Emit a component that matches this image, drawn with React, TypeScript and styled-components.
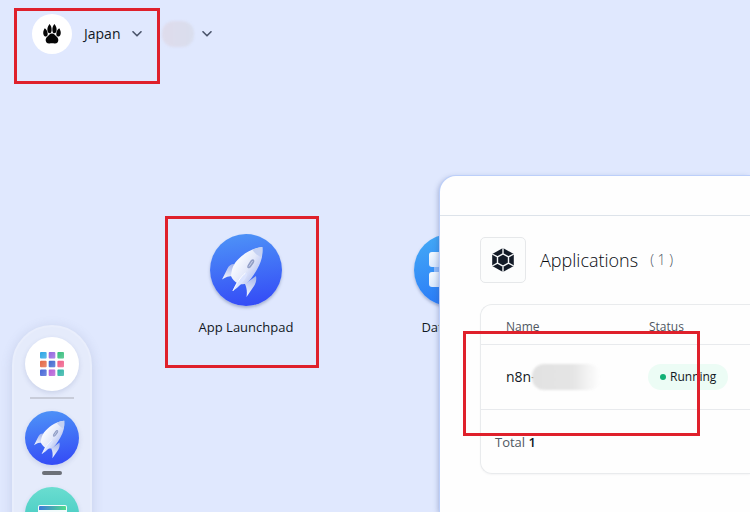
import React from "react";
import styled, { createGlobalStyle, css } from "styled-components";

const GlobalStyle = createGlobalStyle`
  *, *::before, *::after { box-sizing: border-box; }
  body {
    margin: 0;
    font-family: "Open Sans", "Noto Sans", sans-serif;
    color: #111824;
  }
  button { font: inherit; color: inherit; border: 0; padding: 0; background: none; cursor: pointer; }
  svg { display: block; }
`;

const Desktop = styled.div`
  position: relative;
  height: 100vh;
  overflow: hidden;
  background: #e0e8fe;
`;

const TopBar = styled.header`
  display: flex;
  align-items: center;
  height: 68px;
  padding-left: 32px;
`;

const RegionButton = styled.button`
  display: flex;
  align-items: center;
  gap: 12px;
  font-size: 14px;
  line-height: 20px;
`;

const Avatar = styled.span`
  display: grid;
  place-items: center;
  width: 40px;
  height: 40px;
  border-radius: 50%;
  background: #fff;
`;

const WorkspaceButton = styled.button`
  display: flex;
  align-items: center;
  gap: 8px;
  margin-left: 20px;
  font-size: 14px;
`;

const HiddenName = styled.span<{ $tone: "tinted" | "grey" }>`
  display: block;
  filter: blur(1px);
  ${(p) =>
    p.$tone === "tinted"
      ? css`
          width: 32px;
          height: 26px;
          border-radius: 12px;
          background: linear-gradient(90deg, #dfdcec, #d9deee);
        `
      : css`
          width: 68px;
          height: 26px;
          margin-left: -4px;
          border-radius: 12px;
          background: linear-gradient(90deg, #e2e2e2 0%, #e5e5e5 60%, #f5f5f5 85%, #fefefe 100%);
        `}
`;

const Workspace = styled.div`
  display: flex;
  align-items: flex-start;
`;

const Dock = styled.nav`
  display: flex;
  flex-direction: column;
  align-items: center;
  flex: none;
  width: 80px;
  margin: 257px 0 0 12px;
  padding: 10px 0 40px;
  border: 2px solid #e9eefc;
  border-radius: 40px;
  background: #e5ebfb;
  box-shadow: 0 2px 12px rgba(90, 105, 150, 0.2);
`;

const DockButton = styled.button<{ $plain?: boolean }>`
  display: grid;
  place-items: center;
  width: 54px;
  height: 54px;
  border-radius: 50%;
  background: ${(p) => (p.$plain ? "#fff" : "none")};
  box-shadow: 0 2px 5px rgba(60, 80, 140, 0.16);
`;

const DockDivider = styled.hr`
  width: 44px;
  height: 2px;
  margin: 6px 0 12px;
  border: 0;
  background: #c8ccd9;
`;

const ActiveMark = styled.span`
  width: 20px;
  height: 4px;
  margin: 6px 0 12px;
  border-radius: 2px;
  background: #6c7078;
`;

const AppGrid = styled.main`
  display: flex;
  margin: 166px 0 0 52px;
`;

const AppButton = styled.button`
  display: flex;
  flex-direction: column;
  align-items: center;
  gap: 11px;
  width: 204px;
  font-size: 13px;
  line-height: 20px;
`;

const AppIcon = styled.span`
  width: 72px;
  height: 72px;
  border-radius: 50%;
  box-shadow: 0 2px 3px rgba(60, 80, 130, 0.35);
`;

const AppWindow = styled.section`
  position: absolute;
  inset: 176px 0 0 440px;
  border-radius: 16px 0 0 0;
  background: #fefefe;
  box-shadow: 0 0 0 1px #bccffa, -2px 1px 5px rgba(70, 90, 150, 0.35);
`;

const TitleBar = styled.div`
  height: 40px;
  border-bottom: 1px solid #dde3ea;
`;

const WindowBody = styled.div`
  padding: 21px 0 0 40px;
`;

const Heading = styled.div`
  display: flex;
  align-items: center;
`;

const LogoTile = styled.span`
  display: grid;
  place-items: center;
  width: 46px;
  height: 46px;
  margin-right: 14px;
  border: 1px solid #e6e8ea;
  border-radius: 5px;
  background: #fcfdfd;
`;

const Title = styled.h1`
  margin: 0 12px 0 0;
  font-size: 18px;
  line-height: 26px;
  font-weight: 300;
  color: #05080e;
`;

const Count = styled.span`
  font-size: 14px;
  line-height: 20px;
  font-weight: 300;
  color: #4a5361;
`;

const Card = styled.div`
  margin-top: 21px;
  border: 1px solid #e9ebed;
  border-right: 0;
  border-radius: 12px 0 0 12px;
  box-shadow: 0 1px 2px rgba(20, 30, 50, 0.04);
`;

const Table = styled.table`
  width: 100%;
  border-collapse: separate;
  border-spacing: 0;
  table-layout: fixed;
`;

const HeadCell = styled.th<{ $first?: boolean }>`
  width: ${(p) => (p.$first ? "167px" : "auto")};
  height: 40px;
  padding: 4px 0 0 ${(p) => (p.$first ? "25px" : "1px")};
  border-bottom: 1px solid #e8eaed;
  text-align: left;
  font-size: 12px;
  line-height: 16px;
  font-weight: 400;
  color: #505762;
`;

const Cell = styled.td<{ $first?: boolean }>`
  height: 65px;
  padding: 0 0 0 ${(p) => (p.$first ? "25px" : "0")};
  border-bottom: 1px solid #e8eaed;
  font-size: 14px;
  line-height: 20px;
`;

const AppName = styled.span`
  display: flex;
  align-items: center;
`;

const StatusPill = styled.span`
  display: flex;
  align-items: center;
  gap: 4px;
  width: fit-content;
  height: 26px;
  padding: 0 12px;
  border-radius: 13px;
  background: #ecfcf5;
  font-size: 12px;
  line-height: 16px;
`;

const StatusDot = styled.span`
  width: 6px;
  height: 6px;
  border-radius: 50%;
  background: #12b076;
`;

const Footer = styled.div`
  height: 63px;
  padding: 22px 14px;
  font-size: 13px;
  line-height: 20px;
  color: #505762;
`;

const Total = styled.strong`
  font-weight: 600;
  color: #111824;
`;

const highlightPlaces = {
  region: "8px auto auto 14px",
  app: "216px auto auto 165px",
  row: "331px auto auto 463px",
};
const highlightSizes = {
  region: "width: 146px; height: 76px;",
  app: "width: 154px; height: 152px;",
  row: "width: 237px; height: 105px;",
};

const Highlight = styled.div<{ $target: keyof typeof highlightPlaces }>`
  position: absolute;
  inset: ${(p) => highlightPlaces[p.$target]};
  ${(p) => highlightSizes[p.$target]}
  border: 3px solid #df202b;
  pointer-events: none;
`;

function Chevron() {
  return (
    <svg width="10" height="6" viewBox="0 0 10 6" fill="none" stroke="#49536a" strokeWidth="1.6" strokeLinecap="round" strokeLinejoin="round" aria-hidden="true">
      <path d="M1 .8 5 4.8 9 .8" />
    </svg>
  );
}

function Paw() {
  return (
    <svg width="18" height="20" viewBox="0 0 18 20" fill="#050505" aria-hidden="true">
      <path d="M9 9.500c2.200 0 3 1.600 4.500 3 1.600 1.400 2.100 2.800 1.700 4.500-.4 1.800-1.900 2.700-3.600 2.500-1.800-.3-3.400-.3-5.200 0-1.700.2-3.200-.7-3.600-2.500-.4-1.700.1-3.100 1.700-4.500C6 11.100 6.800 9.500 9 9.500Z" />
      <path d="M6.600 0C8.200 2 8.900 4.100 8.600 6.500 8.400 8.400 7.800 9.300 6.700 9.300S4.500 8.200 4.400 6.300C4.200 3.900 5 1.900 6.600 0ZM11.400 0c1.600 1.900 2.400 3.900 2.200 6.300-.1 1.900-1.200 3-2.300 3S9.600 8.400 9.400 6.500C9.100 4.100 9.800 2 11.400 0Z" />
      <path d="M1.800 4.300c1.600 1.300 2.800 3.200 2.900 5.300.1 1.600-.5 2.700-1.700 2.900-1.200.1-2.200-.8-2.600-2.300C-.1 8.200.6 6 1.800 4.300ZM16.200 4.300c1.200 1.700 1.900 3.900 1.400 5.900-.4 1.500-1.400 2.400-2.600 2.300-1.200-.2-1.800-1.300-1.700-2.900.1-2.100 1.300-4 2.900-5.300Z" />
    </svg>
  );
}

function RocketIcon({ size, id }: { size: number; id: string }) {
  return (
    <svg width={size} height={size} viewBox="0 0 72 72" aria-hidden="true">
      <defs>
        <linearGradient id={`${id}-sky`} x1=".45" y1="0" x2=".6" y2="1">
          <stop offset="0" stopColor="#4d91f7" />
          <stop offset="1" stopColor="#344bf6" />
        </linearGradient>
        <linearGradient id={`${id}-hull`} x1=".2" y1=".3" x2=".8" y2=".75">
          <stop offset="0" stopColor="#fafcff" />
          <stop offset=".55" stopColor="#e4e9fa" />
          <stop offset="1" stopColor="#b9c6f3" />
        </linearGradient>
        <linearGradient id={`${id}-fin`} x1=".5" y1="0" x2=".3" y2="1">
          <stop offset="0" stopColor="#aab9ec" />
          <stop offset="1" stopColor="#f2f5ff" />
        </linearGradient>
      </defs>
      <circle cx="36" cy="36" r="36" fill={`url(#${id}-sky)`} />
      <path d="M24 30c-3 0-5 1.500-6.500 4.500L12 45.500c3.500-2.500 7-3.500 11.500-3.500Z" fill={`url(#${id}-fin)`} />
      <path d="M46 42c.8 4.500-.2 8-3 11.500L36.500 63c.8-5 .3-9-1.500-13Z" fill={`url(#${id}-fin)`} />
      <path d="M52.300 13c.8 8-.8 15-5.300 22.500-3.500 6-7 11-11 14.500-3.500-.5-5 1-8.500-.5-2.500-2-5.500-4.500-6.500-7.500.5-4.500 1-8.500 4-13C31 21.500 40 14.500 52.300 13Z" fill={`url(#${id}-hull)`} />
      <path d="M52.300 13c.3 4-.1 7.500-1 10.500-3.800-2-6.800-4.500-9-7.800 3-1.300 6.500-2.300 10-2.700Z" fill="#c5d1f2" />
      <path d="M43.600 25.600c1.200.9.800 2.400 0 3.700l-2.500 3.500c-1 1.300-2.300 2-3.300 1.200s-.5-2.300.3-3.600l2.200-3.300c1-1.400 2.200-2.300 3.300-1.500Z" fill="#909dc5" />
      <path d="m42.400 27.400-3.300 4.900" fill="none" stroke="#c9d1eb" strokeWidth="1" strokeLinecap="round" />
      <path d="M35.500 39c-5 3.500-9.500 9.500-12.700 18C29 53 34 47.500 37 41.500c.5-2-.1-3-1.500-2.500Z" fill="#dbe4ff" />
      <path d="M35.500 39C31 42.500 27 48.500 22.800 57" fill="none" stroke="#fff" strokeWidth=".9" />
    </svg>
  );
}

function DatabaseIcon() {
  return (
    <svg width="72" height="72" viewBox="0 0 72 72" aria-hidden="true">
      <defs>
        <linearGradient id="db-sky" x1=".3" y1="0" x2=".6" y2="1">
          <stop offset="0" stopColor="#43a8f6" />
          <stop offset="1" stopColor="#2877f7" />
        </linearGradient>
        <linearGradient id="db-block" x1="0" y1="0" x2="1" y2="1">
          <stop offset="0" stopColor="#f7fbff" />
          <stop offset="1" stopColor="#c7dcfb" />
        </linearGradient>
      </defs>
      <circle cx="36" cy="36" r="36" fill="url(#db-sky)" />
      <path d="M20 29h32v12H20z" fill="#8fbbf9" />
      <g fill="url(#db-block)">
        <rect x="15" y="18" width="18" height="15" rx="3" />
        <rect x="39" y="18" width="18" height="15" rx="3" />
        <rect x="15" y="38" width="18" height="15" rx="3" />
        <rect x="39" y="38" width="18" height="15" rx="3" />
      </g>
    </svg>
  );
}

const tiles = [
  ["#2ba5e5", "#9466df", "#35bd7c"],
  ["#e36643", "#3e67cf", "#ef5c86"],
  ["#4464d6", "#b45cd6", "#2db2a5"],
];

function TilesIcon() {
  return (
    <svg width="24" height="24" viewBox="0 0 24 24" aria-hidden="true">
      <defs>
        <linearGradient id="tile-light" x1="0" y1="0" x2="1" y2="1">
          <stop offset="0" stopColor="#fff" stopOpacity="0" />
          <stop offset="1" stopColor="#fff" stopOpacity=".25" />
        </linearGradient>
      </defs>
      {tiles.map((row, y) =>
        row.map((color, x) => (
          <g key={color}>
            <rect x={x * 8.700} y={y * 8.700} width="6.600" height="6.600" rx="1" fill={color} />
            <rect x={x * 8.700} y={y * 8.700} width="6.600" height="6.600" rx="1" fill="url(#tile-light)" />
          </g>
        ))
      )}
    </svg>
  );
}

function TerminalIcon() {
  return (
    <svg width="54" height="54" viewBox="0 0 54 54" aria-hidden="true">
      <defs>
        <linearGradient id="term-sea" x1="0" y1="0" x2="0" y2="1">
          <stop offset="0" stopColor="#6addd0" />
          <stop offset="1" stopColor="#35c3bd" />
        </linearGradient>
        <linearGradient id="term-bar" x1="0" y1="0" x2="1" y2="0">
          <stop offset="0" stopColor="#3c78d9" />
          <stop offset="1" stopColor="#51dc8c" />
        </linearGradient>
      </defs>
      <circle cx="27" cy="27" r="27" fill="url(#term-sea)" />
      <rect x="13" y="18" width="29" height="23" rx="2" fill="#f2fbfc" />
      <path d="M15 19h25a1 1 0 0 1 1 1v3H14v-3a1 1 0 0 1 1-1Z" fill="url(#term-bar)" />
    </svg>
  );
}

function HexLogo() {
  return (
    <svg width="24" height="24" viewBox="0 0 24 24" aria-hidden="true">
      <path d="m12 0 10.800 6v12L12 24 1.200 18V6Z" fill="#131b27" />
      <path d="m12 5.800 5.500 3.100v6.200L12 18.200l-5.500-3.100V8.900ZM12 0v5.800M22.800 6l-5.300 2.900M22.800 18l-5.300-2.900M12 24v-5.800M1.200 18l5.300-2.900M1.200 6l5.300 2.900" fill="none" stroke="#f4f6f7" strokeWidth="1.400" />
    </svg>
  );
}

export default function App() {
  return (
    <Desktop>
      <GlobalStyle />
      <TopBar>
        <RegionButton>
          <Avatar><Paw /></Avatar>
          Japan
          <Chevron />
        </RegionButton>
        <WorkspaceButton aria-label="Workspace">
          <HiddenName $tone="tinted" />
          <Chevron />
        </WorkspaceButton>
      </TopBar>

      <Workspace>
        <Dock aria-label="Dock">
          <DockButton $plain aria-label="All apps"><TilesIcon /></DockButton>
          <DockDivider />
          <DockButton aria-label="App Launchpad"><RocketIcon size={54} id="dock" /></DockButton>
          <ActiveMark />
          <DockButton aria-label="Terminal"><TerminalIcon /></DockButton>
        </Dock>
        <AppGrid>
          <AppButton>
            <AppIcon><RocketIcon size={72} id="desk" /></AppIcon>
            App Launchpad
          </AppButton>
          <AppButton>
            <AppIcon><DatabaseIcon /></AppIcon>
            Database
          </AppButton>
        </AppGrid>
      </Workspace>

      <AppWindow>
        <TitleBar />
        <WindowBody>
          <Heading>
            <LogoTile><HexLogo /></LogoTile>
            <Title>Applications</Title>
            <Count>( 1 )</Count>
          </Heading>
          <Card>
            <Table>
              <thead>
                <tr>
                  <HeadCell $first>Name</HeadCell>
                  <HeadCell>Status</HeadCell>
                </tr>
              </thead>
              <tbody>
                <tr>
                  <Cell $first>
                    <AppName>n8n-<HiddenName $tone="grey" /></AppName>
                  </Cell>
                  <Cell>
                    <StatusPill><StatusDot />Running</StatusPill>
                  </Cell>
                </tr>
              </tbody>
            </Table>
            <Footer>Total <Total>1</Total></Footer>
          </Card>
        </WindowBody>
      </AppWindow>

      <Highlight $target="region" />
      <Highlight $target="app" />
      <Highlight $target="row" />
    </Desktop>
  );
}
